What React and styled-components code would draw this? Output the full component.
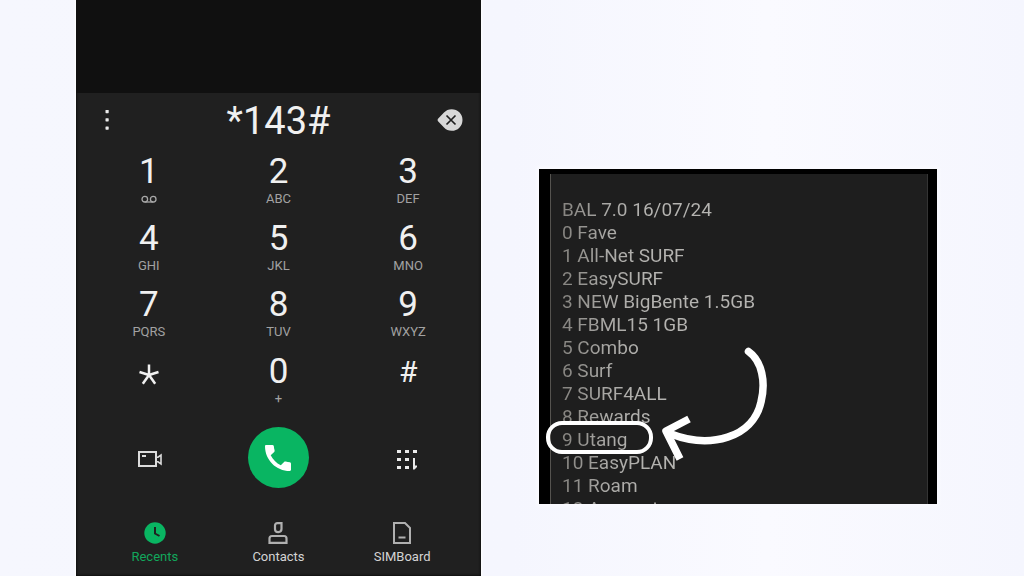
import styled, { createGlobalStyle } from 'styled-components';

const GlobalStyle = createGlobalStyle`
  * {
    box-sizing: border-box;
  }
  body {
    margin: 0;
    font-family: Roboto, 'Liberation Sans', sans-serif;
    background-color: #f6f7fe;
  }
  button,
  input {
    margin: 0;
    padding: 0;
    border: none;
    background: none;
    color: inherit;
    font: inherit;
  }
  svg {
    display: block;
  }
`;

const Page = styled.main`
  display: grid;
  grid-template-columns: minmax(0, 405fr) minmax(0, 398fr);
  column-gap: 58px;
  min-height: 100vh;
  padding: 0 8.5% 0 76px;
  background: linear-gradient(90deg, #f6f7fe 0%, #f5f6fe 50%, #fafaff 75%, #f5f6fe 100%);
`;

const Phone = styled.section`
  display: flex;
  flex-direction: column;
  color: #f0f0f0;
  background-color: #202020;
  box-shadow: 0 0 2px 1px #ffffff, inset 0 0 3px #000000;
`;

const CallLog = styled.div`
  flex: 1;
  min-height: 93px;
  background-color: #101010;
`;

const NumberBar = styled.div`
  display: flex;
  align-items: center;
  height: 56px;
  padding: 0 18px;
`;

const BarButton = styled.button`
  display: flex;
  justify-content: center;
  align-items: center;
  width: 26px;
  height: 28px;
`;

const NumberInput = styled.input`
  flex: 1;
  min-width: 0;
  height: 56px;
  font-size: 38px;
  text-align: center;
  outline: none;
`;

const Keypad = styled.div`
  display: grid;
  grid-template-columns: repeat(3, 1fr);
  grid-template-rows: repeat(4, 1fr);
  height: 266px;
  padding: 0 8px;
`;

const Key = styled.button`
  display: flex;
  flex-direction: column;
  align-items: center;
  padding-top: 1px;
`;

const Digit = styled.span`
  display: flex;
  align-items: center;
  height: 44px;
  line-height: 44px;
  font-size: ${({ $small }) => ($small ? 30 : 35)}px;
`;

const Letters = styled.span`
  display: flex;
  align-items: center;
  height: 10px;
  line-height: 10px;
  font-size: 13px;
  color: #a2a2a2;
`;

const Actions = styled.div`
  display: grid;
  grid-template-columns: repeat(3, 1fr);
  place-items: center;
  padding: 12px 8px 0;
`;

const ActionButton = styled.button`
  display: flex;
  justify-content: center;
  align-items: center;
  width: 48px;
  height: 48px;
`;

const CallButton = styled(ActionButton)`
  width: 61px;
  height: 61px;
  border-radius: 50%;
  background-color: #09b562;
`;

const TabBar = styled.nav`
  display: grid;
  grid-template-columns: repeat(3, 1fr);
  padding: 34px 17px 11px;
`;

const Tab = styled.a`
  display: flex;
  flex-direction: column;
  align-items: center;
  gap: 5px;
  line-height: 16px;
  font-size: 13px;
  text-decoration: none;
  color: ${({ $active }) => ($active ? '#12a75c' : '#d4d4d4')};
`;

const Message = styled.section`
  position: relative;
  align-self: start;
  height: 335px;
  margin-top: 169px;
  padding: 5px 9px 0 11px;
  overflow: hidden;
  background-color: #000000;
  box-shadow: 0 0 3px 2px #fbfbff;
`;

const MessageBody = styled.div`
  min-height: 100%;
  padding: 24px 11px 0;
  border-left: 1px solid #55534f;
  border-right: 1px solid #343434;
  background-color: #1e1e1e;
  line-height: 23px;
  font-size: 19px;
  white-space: nowrap;
  color: transparent;
`;

const MenuText = styled.div`
  background: linear-gradient(90deg, #85837f 0, #a9a8a5 44px, #b5b4b1 90px);
  background-clip: text;
  -webkit-background-clip: text;
`;

const MenuList = styled.ul`
  margin: 0;
  padding: 0;
  list-style: none;
`;

const Ring = styled.span`
  position: absolute;
  top: 252px;
  left: 7px;
  width: 107px;
  height: 33px;
  border: 4px solid #ffffff;
  border-radius: 16px;
`;

const Arrow = styled.svg`
  position: absolute;
  top: 171px;
  left: 117px;
`;

const VoicemailIcon = () => (
  <svg width="16" height="10" viewBox="0 0 16 10" fill="none" stroke="#a8a8a8" strokeWidth="1.3">
    <circle cx="3.8" cy="5.2" r="2.8" />
    <circle cx="12.2" cy="5.2" r="2.8" />
    <path d="M3.8 8h8.4" />
  </svg>
);

const StarIcon = () => (
  <svg width="20" height="27" viewBox="0 -6 20 27" fill="none" stroke="currentColor" strokeWidth="2.5">
    <path d="M10 11V.5M10 11 .5 8M10 11l9.5-3M10 11l-6.2 8.8M10 11l6.2 8.8" />
  </svg>
);

const keys = [
  { id: '1', digit: '1', letters: <VoicemailIcon /> },
  { id: '2', digit: '2', letters: 'ABC' },
  { id: '3', digit: '3', letters: 'DEF' },
  { id: '4', digit: '4', letters: 'GHI' },
  { id: '5', digit: '5', letters: 'JKL' },
  { id: '6', digit: '6', letters: 'MNO' },
  { id: '7', digit: '7', letters: 'PQRS' },
  { id: '8', digit: '8', letters: 'TUV' },
  { id: '9', digit: '9', letters: 'WXYZ' },
  { id: 'star', digit: <StarIcon />, small: true },
  { id: '0', digit: '0', letters: '+' },
  { id: 'hash', digit: '#', small: true },
];

const menu = [
  '0 Fave',
  '1 All-Net SURF',
  '2 EasySURF',
  '3 NEW BigBente 1.5GB',
  '4 FBML15 1GB',
  '5 Combo',
  '6 Surf',
  '7 SURF4ALL',
  '8 Rewards',
  '9 Utang',
  '10 EasyPLAN',
  '11 Roam',
  '12 Account',
];

const App = () => {
  return (
    <Page>
      <GlobalStyle />
      <Phone>
        <CallLog />
        <NumberBar>
          <BarButton aria-label="More options">
            <svg width="4" height="22" viewBox="0 0 4 22" fill="#ececec">
              <rect x="0.5" width="3.2" height="3.2" rx="0.6" />
              <rect x="0.5" y="8.2" width="3.2" height="3.2" rx="0.6" />
              <rect x="0.5" y="16.5" width="3.2" height="3.2" rx="0.6" />
            </svg>
          </BarButton>
          <NumberInput type="tel" aria-label="Phone number" defaultValue="*143#" />
          <BarButton aria-label="Delete">
            <svg width="26" height="24" viewBox="0 0 26 24">
              <path
                d="M.6 11c0-.8.3-1.100.9-1.700L7 3.500C9 1.400 11.500.2 14.700.2a10.800 10.800 0 0 1 0 21.600C11.500 21.800 9 20.600 7 18.500l-5.500-5.800C.9 12.100.6 11.800.6 11z"
                fill="#d8d8d8"
              />
              <path d="m9.500 6.500 9 9m0-9-9 9" stroke="#202020" strokeWidth="1.7" />
            </svg>
          </BarButton>
        </NumberBar>
        <Keypad>
          {keys.map(({ id, digit, letters, small }) => (
            <Key key={id} aria-label={id}>
              <Digit $small={small}>{digit}</Digit>
              {letters && <Letters>{letters}</Letters>}
            </Key>
          ))}
        </Keypad>
        <Actions>
          <ActionButton aria-label="Video call">
            <svg width="26" height="20" viewBox="0 0 26 20" fill="none" stroke="#dcdcdc">
              <rect x="3" y="4" width="17" height="14" strokeWidth="2" />
              <path d="M6 8h4" strokeWidth="2" />
              <path d="M20 9.2h2L25 7v9l-3-2.200h-2" strokeWidth="1.6" />
            </svg>
          </ActionButton>
          <CallButton aria-label="Call">
            <svg width="26" height="26" viewBox="0 0 26 26" fill="#ffffff">
              <path d="M0 1.200C0 .4.5 0 1.200 0h6.200c.7 0 1.200.4 1.400 1.100.1 1.400.4 2.900.8 4.200.1.6 0 1.200-.4 1.600L5.700 10.200c2.100 4.300 5.700 7.900 10.100 10.100l3.300-3.400c.4-.4 1-.5 1.600-.4 1.400.4 2.800.7 4.200.8.7.1 1.100.7 1.100 1.400v6.100c0 .7-.5 1.200-1.200 1.200C11.100 26 0 14.900 0 1.200z" />
            </svg>
          </CallButton>
          <ActionButton aria-label="Hide keypad">
            <svg width="24" height="26" viewBox="0 -4 24 26" fill="#ececec">
              <rect x="1" y="1" width="4" height="3" />
              <rect x="9" y="1" width="4" height="3" />
              <rect x="17" y="1" width="4" height="3" />
              <rect x="1" y="9" width="4" height="3" />
              <rect x="9" y="9" width="4" height="3" />
              <rect x="1" y="17" width="4" height="3" />
              <rect x="9" y="17" width="4" height="3" />
              <path d="M17 9h2v7.500h2V18l-2.500 2.500H17z" />
            </svg>
          </ActionButton>
        </Actions>
        <TabBar>
          <Tab href="#recents" $active>
            <svg width="22" height="22" viewBox="0 0 22 22">
              <circle cx="11" cy="11" r="10.7" fill="#09b562" />
              <path d="M11 5v6.500l4.500 2.500" fill="none" stroke="#202020" strokeWidth="2" />
            </svg>
            Recents
          </Tab>
          <Tab href="#contacts">
            <svg width="20" height="22" viewBox="0 0 20 22" fill="none" stroke="#b0b0b0" strokeWidth="2.2">
              <path d="M9.500 1.100h4v6q0 3-3.200 3T7 7.200V3.600Q7 1.100 9.500 1.100z" />
              <path d="M4 14h12q2.500 0 2.500 2.500v4.400h-17v-4.400Q1.500 14 4 14z" />
            </svg>
            Contacts
          </Tab>
          <Tab href="#simboard">
            <svg width="18" height="22" viewBox="0 0 18 22" fill="none" stroke="#b0b0b0" strokeWidth="2">
              <path d="M1 1h11l5 5v15H1z" />
              <path d="M5.500 15.500h7" />
            </svg>
            SIMBoard
          </Tab>
        </TabBar>
      </Phone>
      <Message>
        <MessageBody>
          <MenuText>
            BAL 7.0 16/07/24
            <MenuList>
              {menu.map((item) => (
                <li key={item}>{item}</li>
              ))}
            </MenuList>
          </MenuText>
        </MessageBody>
        <Ring />
        <Arrow width="120" height="125" viewBox="656 340 120 125" fill="none" stroke="#ffffff">
          <path
            d="M748.500 351.500C762 361 766 382 761 402C753 438 710 449 671 434"
            strokeWidth="7.5"
            strokeLinecap="round"
          />
          <path d="M689 419 666 431 680 459" strokeWidth="7.5" strokeLinejoin="round" />
        </Arrow>
      </Message>
    </Page>
  );
};

export default App;
